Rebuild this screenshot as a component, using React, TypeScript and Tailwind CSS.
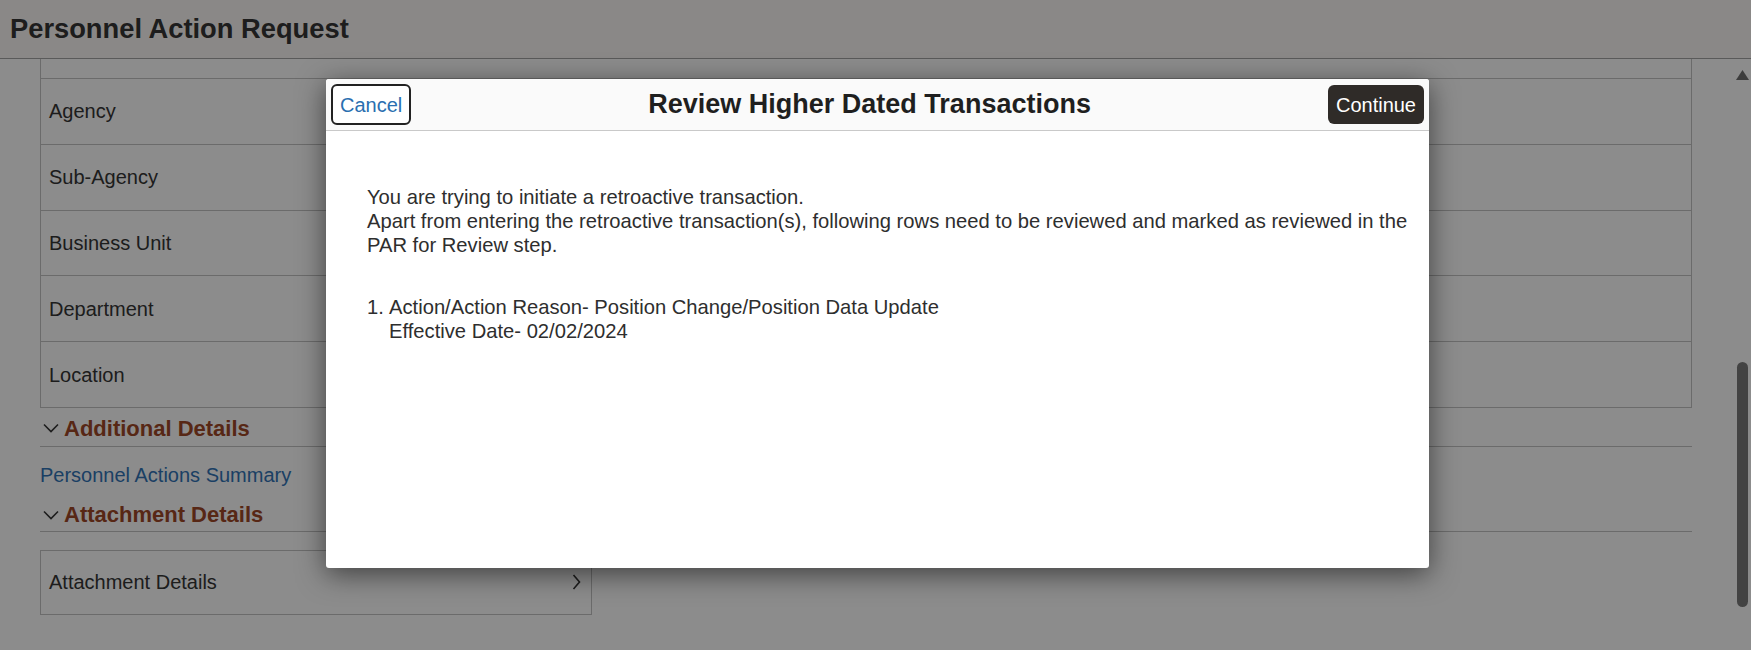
import React from 'react';

const rows = ['Agency', 'Sub-Agency', 'Business Unit', 'Department', 'Location'];

function ChevronDown() {
  return (
    <svg width="16" height="10" viewBox="0 0 16 10" className="shrink-0">
      <polyline points="1,1.5 8,8.5 15,1.5" fill="none" stroke="#333" strokeWidth="1.6" />
    </svg>
  );
}

function ChevronRight() {
  return (
    <svg width="9" height="16" viewBox="0 0 9 16" className="shrink-0">
      <polyline points="1.5,1 7.5,8 1.5,15" fill="none" stroke="#333" strokeWidth="1.6" />
    </svg>
  );
}

function SectionHeading({ title, className }: { title: string; className?: string }) {
  return (
    <div className={`flex items-center gap-[5px] border-b border-[#bdbdbd] pl-[3px] ${className ?? ''}`}>
      <ChevronDown />
      <span className="text-[22px] font-bold text-[#9a4526]">{title}</span>
    </div>
  );
}

function ReviewDialog() {
  return (
    <div className="flex h-[489px] w-[1103px] flex-col overflow-hidden rounded-[3px] bg-white shadow-[0_6px_28px_rgba(0,0,0,0.55)]">
      <header className="flex h-[52px] shrink-0 items-center border-b border-[#c9c9c9] bg-[#fafafa] px-[5px]">
        <button className="h-[41px] rounded-[6px] border-2 border-[#222] bg-white px-[7px] text-[20px] text-[#2a6fb0]">
          Cancel
        </button>
        <h2 className="flex-1 text-center text-[27px] font-bold text-[#1f1f1f]">
          Review Higher Dated Transactions
        </h2>
        <button className="h-[39px] rounded-[6px] bg-[#2f2b28] px-[8px] text-[20px] text-white">
          Continue
        </button>
      </header>

      <div className="pl-[41px] pr-[6px] pt-[54px] text-[20.2px] leading-[24px] text-[#2e2e2e]">
        <p>
          You are trying to initiate a retroactive transaction.
          <br />
          Apart from entering the retroactive transaction(s), following rows need to be reviewed and marked as reviewed in the
          <br />
          PAR for Review step.
        </p>
        <div className="mt-[38px] flex">
          <span className="w-[22px] shrink-0">1.</span>
          <p>
            Action/Action Reason- Position Change/Position Data Update
            <br />
            Effective Date- 02/02/2024
          </p>
        </div>
      </div>
    </div>
  );
}

export default function App() {
  return (
    <div className="relative h-[650px] w-full overflow-hidden bg-[#f6f6f6] font-['Liberation_Sans',Arial,sans-serif] text-[#333]">
      {/* page title bar */}
      <div className="flex h-[59px] items-center border-b border-[#9e9e9e] bg-[#f3f0ed] pl-[10px]">
        <h1 className="text-[27.3px] font-bold text-[#333]">Personnel Action Request</h1>
      </div>

      <div className="flex">
        <div className="w-[1692px] pl-[40px]">
          {/* job data table (scrolled) */}
          <div className="border-x border-b border-[#bdbdbd]">
            <div className="h-[19px]" />
            {rows.map((label) => (
              <div
                key={label}
                className="flex h-[65.8px] items-center border-t border-[#bdbdbd] pl-[8px] text-[20px]"
              >
                {label}
              </div>
            ))}
          </div>

          <SectionHeading title="Additional Details" className="h-[39px] pt-[3px]" />
          <div className="flex h-[56px] items-center">
            <a className="text-[20px] text-[#3070b0]">Personnel Actions Summary</a>
          </div>
          <SectionHeading title="Attachment Details" className="h-[29px] pb-[4px]" />

          <div className="mt-[18px] flex h-[65px] w-[552px] items-center justify-between border border-[#bdbdbd] pl-[8px] pr-[10px] text-[20px]">
            <span>Attachment Details</span>
            <ChevronRight />
          </div>
        </div>

        {/* fake scrollbar */}
        <div className="ml-auto mr-[2px] flex w-[13px] flex-col items-center">
          <svg width="13" height="10" viewBox="0 0 13 10" className="mt-[11px]">
            <polygon points="6.5,0 13,10 0,10" fill="#6a6a6a" />
          </svg>
          <div className="mt-[282px] h-[245px] w-[11px] rounded-full bg-[#777]" />
        </div>
      </div>

      {/* modal overlay */}
      <div className="absolute inset-0 flex items-center justify-center bg-black/[0.43] pb-[3px] pl-[4px]">
        <ReviewDialog />
      </div>
    </div>
  );
}
